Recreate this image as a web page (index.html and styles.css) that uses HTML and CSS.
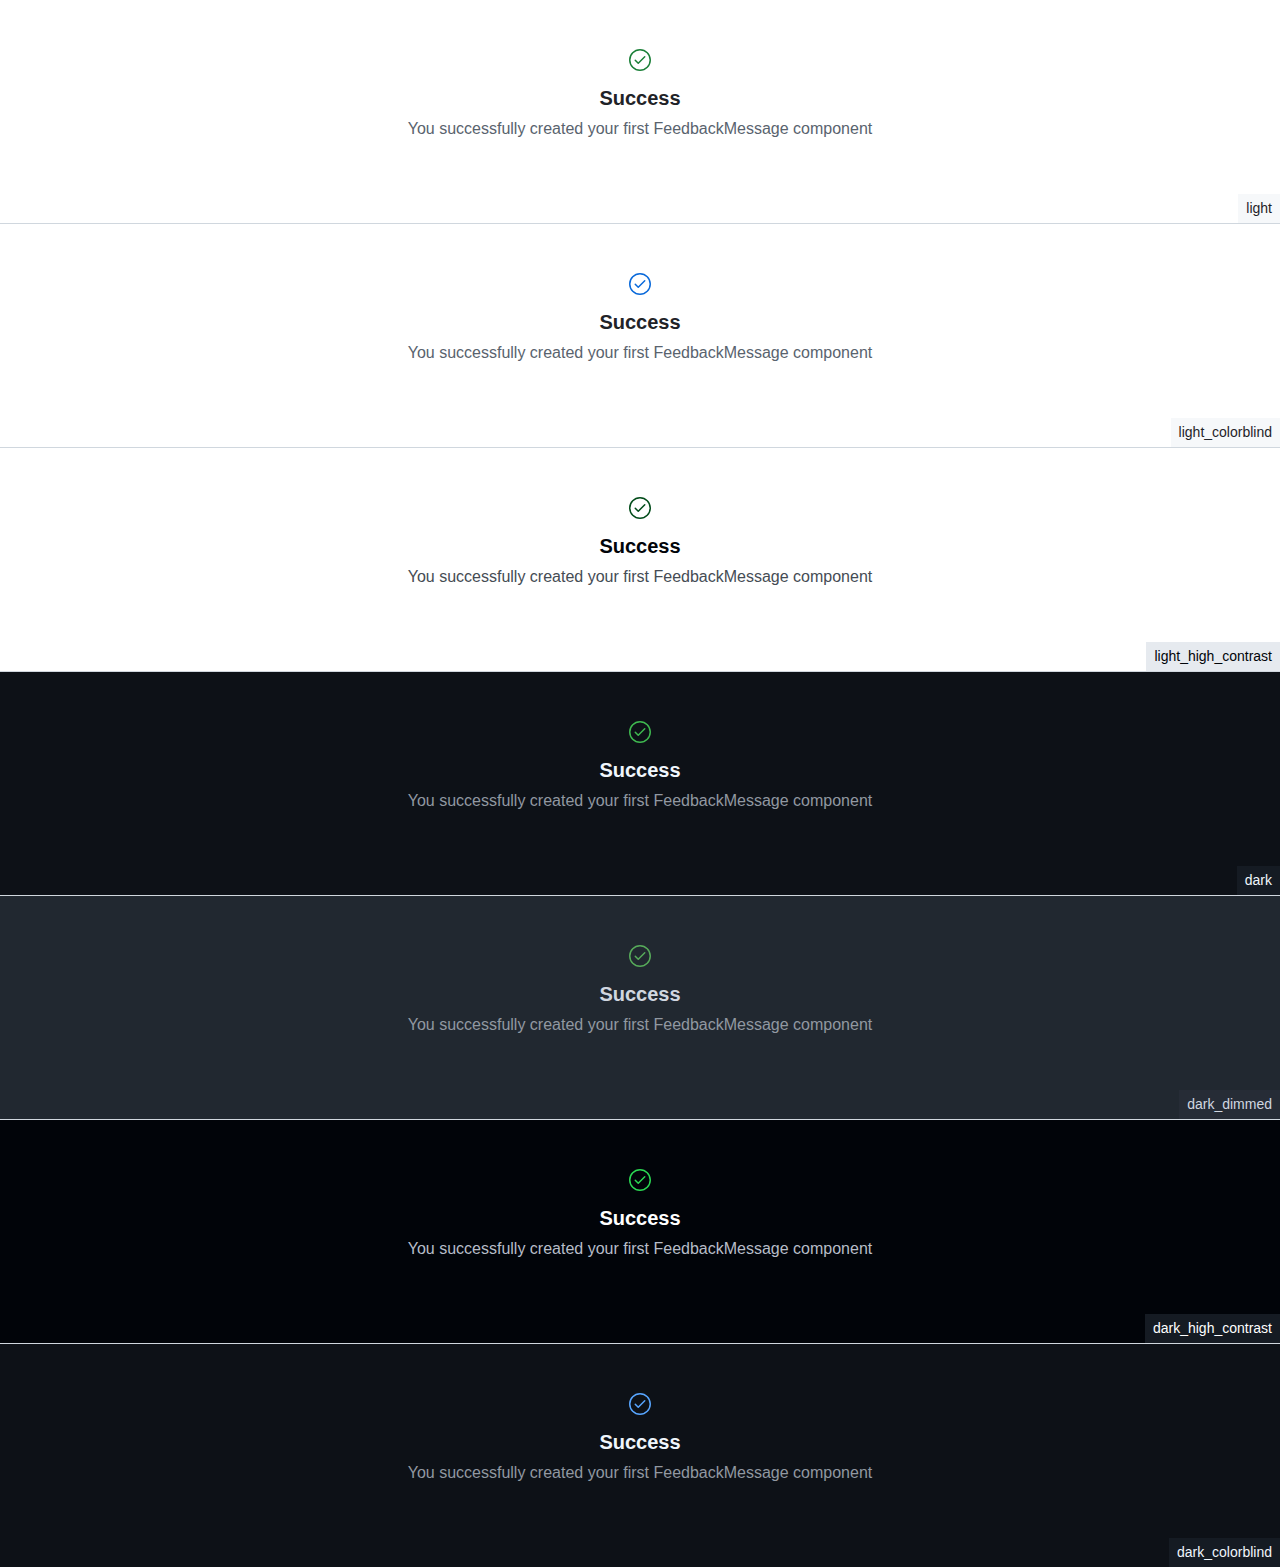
FILE: index.html
```html
<!DOCTYPE html>
<html lang="en">
<head>
<meta charset="utf-8">
<title>FeedbackMessage</title>
<link rel="stylesheet" href="styles.css">
</head>
<body>
<svg class="sprite" aria-hidden="true"><symbol id="check-circle" viewBox="0 0 24 24"><path d="M17.28 9.28a.75.75 0 0 0-1.06-1.06l-5.97 5.97-2.47-2.47a.75.75 0 0 0-1.06 1.06l3 3a.75.75 0 0 0 1.06 0l6.5-6.5Z"/><path d="M12 1c6.075 0 11 4.925 11 11s-4.925 11-11 11S1 18.075 1 12 5.925 1 12 1ZM2.5 12a9.5 9.5 0 0 0 9.5 9.5 9.5 9.5 0 0 0 9.5-9.5A9.5 9.5 0 0 0 12 2.5 9.5 9.5 0 0 0 2.5 12Z"/></symbol></svg>
<section class="theme light"><div class="message"><svg class="icon"><use href="#check-circle"/></svg><h2>Success</h2><p>You successfully created your first FeedbackMessage component</p></div><span class="label">light</span></section>
<section class="theme light light-colorblind"><div class="message"><svg class="icon"><use href="#check-circle"/></svg><h2>Success</h2><p>You successfully created your first FeedbackMessage component</p></div><span class="label">light_colorblind</span></section>
<section class="theme light-high-contrast"><div class="message"><svg class="icon"><use href="#check-circle"/></svg><h2>Success</h2><p>You successfully created your first FeedbackMessage component</p></div><span class="label">light_high_contrast</span></section>
<section class="theme dark"><div class="message"><svg class="icon"><use href="#check-circle"/></svg><h2>Success</h2><p>You successfully created your first FeedbackMessage component</p></div><span class="label">dark</span></section>
<section class="theme dark-dimmed"><div class="message"><svg class="icon"><use href="#check-circle"/></svg><h2>Success</h2><p>You successfully created your first FeedbackMessage component</p></div><span class="label">dark_dimmed</span></section>
<section class="theme dark-high-contrast"><div class="message"><svg class="icon"><use href="#check-circle"/></svg><h2>Success</h2><p>You successfully created your first FeedbackMessage component</p></div><span class="label">dark_high_contrast</span></section>
<section class="theme dark dark-colorblind"><div class="message"><svg class="icon"><use href="#check-circle"/></svg><h2>Success</h2><p>You successfully created your first FeedbackMessage component</p></div><span class="label">dark_colorblind</span></section>
</body>
</html>
```
FILE: styles.css
```css
* { box-sizing: border-box; }
body { margin: 0; font-family: "Liberation Sans", Arial, sans-serif; }
.sprite { display: none; }
.theme {
  display: flex;
  flex-direction: column;
  justify-content: space-between;
  height: 224px;
  padding-top: 48px;
  border-bottom: 1px solid #d0d7de;
  background: var(--bg);
  color: var(--fg);
}
.theme:last-child { height: 223px; border-bottom: 0; }
.message { display: flex; flex-direction: column; align-items: center; }
.icon { width: 24px; height: 24px; fill: var(--success); }
h2 { margin: 11px 0 4px; font-size: 20px; line-height: 30px; font-weight: 700; }
p { margin: 0; font-size: 16px; line-height: 24px; color: var(--muted); }
.label {
  align-self: flex-end;
  padding: 4px 8px;
  font-size: 14px;
  line-height: 21px;
  background: var(--label);
}
.light { --bg: #ffffff; --fg: #1f2328; --muted: #59636e; --success: #1a7f37; --label: #f6f8fa; }
.light-colorblind { --success: #0969da; }
.light-high-contrast { --bg: #ffffff; --fg: #010409; --muted: #454c54; --success: #024c1a; --label: #e6eaef; }
.dark { --bg: #0d1117; --fg: #f0f6fc; --muted: #9198a1; --success: #3fb950; --label: #151b23; }
.dark-colorblind { --success: #58a6ff; }
.dark-dimmed { --bg: #212830; --fg: #d1d7e0; --muted: #9198a1; --success: #57ab5a; --label: #262c36; }
.dark-high-contrast { --bg: #010409; --fg: #ffffff; --muted: #b7bdc8; --success: #2bd853; --label: #151b23; }
```
